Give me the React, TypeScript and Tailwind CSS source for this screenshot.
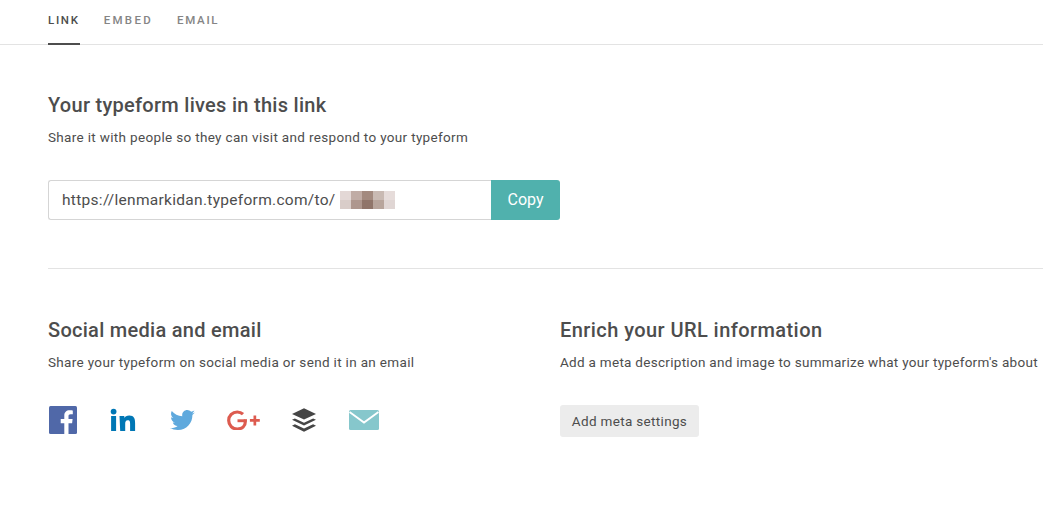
// App.tsx
// Typeform share panel: link tab.

const blurPixels = [
  "#e3d8d6", "#c0aca5", "#a38a7f", "#c9bab3", "#e6dcda",
  "#d9cdc9", "#ae978e", "#90756a", "#b8a59c", "#e0d6d4",
];

function Facebook() {
  return (
    <svg width="30" height="30" viewBox="0 0 30 30">
      <rect x="1" y="1" width="28" height="28" rx="1.5" fill="#5068a8" />
      <path
        d="M20.500 29V18.200h3.600l.5-4.200h-4.100v-2.700c0-1.200.4-2 2.100-2h2.200V5.500c-.4 0-1.700-.2-3.200-.2-3.200 0-5.300 1.900-5.300 5.500V14h-3.600v4.200h3.600V29z"
        fill="#fff"
      />
    </svg>
  );
}

function Linkedin() {
  return (
    <svg width="26" height="24" viewBox="0 0 26 24">
      <circle cx="3.600" cy="3.600" r="2.900" fill="#0077b5" />
      <rect x="1.100" y="8" width="5" height="15" fill="#0077b5" />
      <path
        d="M9.500 8h4.800v2.100c.7-1.300 2.400-2.500 4.900-2.500 5 0 5.900 3.300 5.900 7.600V23h-5v-7c0-1.700 0-3.800-2.300-3.800s-2.600 1.800-2.600 3.700V23h-5z"
        fill="#0077b5"
      />
    </svg>
  );
}

function Twitter() {
  return (
    <svg width="25" height="21" viewBox="0 0 24 20">
      <path
        d="M24 2.400c-.9.4-1.800.7-2.800.8 1-.6 1.800-1.600 2.200-2.700-1 .6-2 1-3.100 1.200C19.300.7 18 0 16.600 0c-2.700 0-4.900 2.200-4.900 4.900 0 .4 0 .8.1 1.100C7.700 5.800 4.100 3.900 1.700.9c-.4.7-.7 1.600-.7 2.500 0 1.700.9 3.200 2.200 4.100-.8 0-1.600-.2-2.200-.6v.1c0 2.400 1.700 4.400 3.900 4.800-.4.1-.8.2-1.300.2-.3 0-.6 0-.9-.1.6 2 2.400 3.400 4.600 3.400-1.700 1.300-3.800 2.100-6.100 2.100-.4 0-.8 0-1.200-.1C2.200 18.300 4.800 19.200 7.500 19.200c9.100 0 14-7.500 14-14v-.6c1-.7 1.800-1.600 2.500-2.200z"
        fill="#5fa9dd"
      />
    </svg>
  );
}

function GooglePlus() {
  return (
    <svg width="34" height="20" viewBox="0 0 34 20">
      <path
        d="M19.200 9.300c.1.600.2 1.100.2 1.600 0 4.900-3.200 8.100-8.100 8.100-4.800 0-8.600-3.800-8.600-8.500S6.500 2 11.300 2c2.300 0 4.200.8 5.700 2.200"
        fill="none"
        stroke="#dd5b4f"
        strokeWidth="3.200"
      />
      <path d="M11.500 9.300h7.700v2.900h-7.700z" fill="#dd5b4f" />
      <path d="M27.500 5.500h2.700v3.600h3.600v2.700h-3.600v3.600h-2.700v-3.600h-3.600V9.100h3.600z" fill="#dd5b4f" />
    </svg>
  );
}

function Buffer() {
  return (
    <svg width="24" height="24" viewBox="1.500 1 23 22.500">
      <path d="M13 1l11.500 5.400L13 11.800 1.500 6.400z" fill="#454545" />
      <path d="M4.300 10.700L13 14.800l8.700-4.100 2.800 1.400L13 17.500 1.500 12.100z" fill="#454545" />
      <path d="M4.300 16.400L13 20.500l8.700-4.100 2.800 1.400L13 23.500 1.500 17.800z" fill="#454545" />
    </svg>
  );
}

function Mail() {
  return (
    <svg width="30" height="20" viewBox="0 0 30 20">
      <rect x="0" y="0" width="30" height="20" rx="1.500" fill="#86c7cc" />
      <path d="M0.500 2L15 12.500 29.500 2" fill="none" stroke="#fff" strokeWidth="2" />
    </svg>
  );
}

export default function App() {
  return (
    <div className="h-[519px] w-[1043px] overflow-hidden bg-white font-['Roboto',sans-serif] text-[#4d4d4d]">
      {/* Tabs */}
      <nav className="flex h-[45px] gap-6 border-b border-[#e3e3e3] pl-12">
        <a className="h-[45px] border-b-2 border-[#4d4d4d] pt-[12px] text-[11.500px] leading-[16px] font-medium tracking-[1.700px] text-[#4d4d4d]">
          LINK
        </a>
        <a className="pt-[12px] text-[11.500px] leading-[16px] font-medium tracking-[2.300px] text-[#858585]">
          EMBED
        </a>
        <a className="pt-[12px] text-[11.500px] leading-[16px] font-medium tracking-[1.700px] text-[#858585]">
          EMAIL
        </a>
      </nav>

      <main className="pl-12">
        {/* Link */}
        <section className="h-[224px] border-b border-[#e3e3e3] pt-[48px]">
          <h2 className="text-[20px] leading-[24px] font-medium tracking-[0.280px]">
            Your typeform lives in this link
          </h2>
          <p className="mt-[10px] text-[13.500px] leading-[20px] tracking-[0.330px]">
            Share it with people so they can visit and respond to your typeform
          </p>
          <div className="mt-[33px] flex h-10 w-[512px]">
            <div className="flex flex-1 items-center rounded-l-[3px] border border-r-0 border-[#d5d5d5] pl-[13px] text-[15.500px] tracking-[0.290px]">
              <span className="pt-px">https://lenmarkidan.typeform.com/to/</span>
              <div className="ml-[4px] grid h-[18px] w-[55px] grid-cols-5 grid-rows-2">
                {blurPixels.map((color, i) => (
                  <span key={i} style={{ background: color }} />
                ))}
              </div>
            </div>
            <button className="w-[69px] rounded-r-[3px] bg-[#50b1ad] text-[16px] text-white">
              Copy
            </button>
          </div>
        </section>

        {/* Social + meta */}
        <section className="flex pt-[49px]">
          <div className="w-[512px] shrink-0">
            <h2 className="text-[20px] leading-[24px] font-medium tracking-[0.280px]">
              Social media and email
            </h2>
            <p className="mt-[10px] text-[13.500px] leading-[20px] tracking-[0.330px]">
              Share your typeform on social media or send it in an email
            </p>
            <div className="mt-[28px] flex h-[40px] items-center">
              <div className="flex w-[61px]"><Facebook /></div>
              <div className="flex w-[60px] pl-[1px]"><Linkedin /></div>
              <div className="flex w-[57px] pl-[1px]"><Twitter /></div>
              <div className="flex w-[65px]"><GooglePlus /></div>
              <div className="flex w-[58px] pl-[1px]"><Buffer /></div>
              <div className="flex"><Mail /></div>
            </div>
          </div>
          <div className="shrink-0">
            <h2 className="text-[20px] leading-[24px] font-medium tracking-[0.430px] whitespace-nowrap">
              Enrich your URL information
            </h2>
            <p className="mt-[10px] text-[13.500px] leading-[20px] tracking-[0.290px] whitespace-nowrap">
              Add a meta description and image to summarize what your typeform's about
            </p>
            <button className="mt-[33px] h-8 w-[139px] rounded-[3px] bg-[#ececec] text-[13.500px] tracking-[0.330px]">
              Add meta settings
            </button>
          </div>
        </section>
      </main>
    </div>
  );
}
